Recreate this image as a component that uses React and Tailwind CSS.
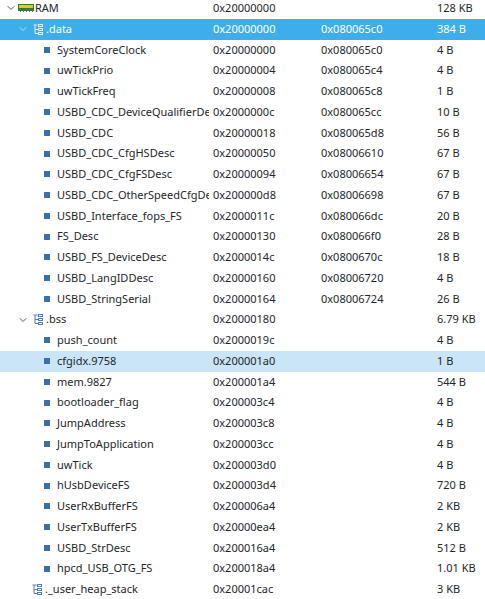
import { ChevronDown } from 'lucide-react';

const rows = [
  { t: 'group', name: 'RAM', a: '0x20000000', l: '', s: '128 KB', lvl: 0 },
  { t: 'sec', name: '.data', a: '0x20000000', l: '0x080065c0', s: '384 B', sel: 'strong' },
  { t: 'sym', name: 'SystemCoreClock', a: '0x20000000', l: '0x080065c0', s: '4 B' },
  { t: 'sym', name: 'uwTickPrio', a: '0x20000004', l: '0x080065c4', s: '4 B' },
  { t: 'sym', name: 'uwTickFreq', a: '0x20000008', l: '0x080065c8', s: '1 B' },
  { t: 'sym', name: 'USBD_CDC_DeviceQualifierDesc', a: '0x2000000c', l: '0x080065cc', s: '10 B' },
  { t: 'sym', name: 'USBD_CDC', a: '0x20000018', l: '0x080065d8', s: '56 B' },
  { t: 'sym', name: 'USBD_CDC_CfgHSDesc', a: '0x20000050', l: '0x08006610', s: '67 B' },
  { t: 'sym', name: 'USBD_CDC_CfgFSDesc', a: '0x20000094', l: '0x08006654', s: '67 B' },
  { t: 'sym', name: 'USBD_CDC_OtherSpeedCfgDesc', a: '0x200000d8', l: '0x08006698', s: '67 B' },
  { t: 'sym', name: 'USBD_Interface_fops_FS', a: '0x2000011c', l: '0x080066dc', s: '20 B' },
  { t: 'sym', name: 'FS_Desc', a: '0x20000130', l: '0x080066f0', s: '28 B' },
  { t: 'sym', name: 'USBD_FS_DeviceDesc', a: '0x2000014c', l: '0x0800670c', s: '18 B' },
  { t: 'sym', name: 'USBD_LangIDDesc', a: '0x20000160', l: '0x08006720', s: '4 B' },
  { t: 'sym', name: 'USBD_StringSerial', a: '0x20000164', l: '0x08006724', s: '26 B' },
  { t: 'sec', name: '.bss', a: '0x20000180', l: '', s: '6.79 KB' },
  { t: 'sym', name: 'push_count', a: '0x2000019c', l: '', s: '4 B' },
  { t: 'sym', name: 'cfgidx.9758', a: '0x200001a0', l: '', s: '1 B', sel: 'light' },
  { t: 'sym', name: 'mem.9827', a: '0x200001a4', l: '', s: '544 B' },
  { t: 'sym', name: 'bootloader_flag', a: '0x200003c4', l: '', s: '4 B' },
  { t: 'sym', name: 'JumpAddress', a: '0x200003c8', l: '', s: '4 B' },
  { t: 'sym', name: 'JumpToApplication', a: '0x200003cc', l: '', s: '4 B' },
  { t: 'sym', name: 'uwTick', a: '0x200003d0', l: '', s: '4 B' },
  { t: 'sym', name: 'hUsbDeviceFS', a: '0x200003d4', l: '', s: '720 B' },
  { t: 'sym', name: 'UserRxBufferFS', a: '0x200006a4', l: '', s: '2 KB' },
  { t: 'sym', name: 'UserTxBufferFS', a: '0x20000ea4', l: '', s: '2 KB' },
  { t: 'sym', name: 'USBD_StrDesc', a: '0x200016a4', l: '', s: '512 B' },
  { t: 'sym', name: 'hpcd_USB_OTG_FS', a: '0x200018a4', l: '', s: '1.01 KB' },
  { t: 'leaf', name: '._user_heap_stack', a: '0x20001cac', l: '', s: '3 KB' },
];

// chip icon for memory region
function RamIcon() {
  return (
    <svg width="16" height="10" viewBox="0 0 16 10">
      <rect x="0" y="1" width="16" height="7" fill="#2e7d32" />
      <rect x="1" y="2" width="14" height="3" fill="#f0c419" />
      <rect x="2" y="6" width="1" height="3" fill="#666" />
      <rect x="5" y="6" width="1" height="3" fill="#666" />
      <rect x="8" y="6" width="1" height="3" fill="#666" />
      <rect x="11" y="6" width="1" height="3" fill="#666" />
      <rect x="14" y="6" width="1" height="3" fill="#666" />
    </svg>
  );
}

// tree-ish section icon
function SecIcon({ white }) {
  const c = white ? '#dbeefb' : '#4f7fb0';
  return (
    <svg width="10" height="11" viewBox="0 0 10 11" fill="none" stroke={c} strokeWidth="1">
      <path d="M0.5 1h4M2 1v8.5h3M2 5.5h3" />
      <rect x="5.5" y="4.5" width="4" height="2" />
      <rect x="5.5" y="8.5" width="4" height="2" />
      <rect x="5.5" y="0.5" width="4" height="2" />
    </svg>
  );
}

export default function App() {
  return (
    <div className="w-[485px] h-[599px] overflow-hidden bg-white text-[11px] text-[#232629]" style={{ fontFamily: '"Noto Sans", sans-serif' }}>
      <div className="-mt-[2px]">
        {rows.map((r, i) => {
          const strong = r.sel === 'strong';
          const bg = strong ? 'bg-[#3daee9] text-white' : r.sel === 'light' ? 'bg-[#c9e5f7]' : '';
          return (
            <div key={i} className={`flex items-center h-[20.75px] ${bg}`}>
              <div className="w-[209px] flex items-center overflow-hidden whitespace-nowrap">
                {r.t === 'group' && (
                  <>
                    <ChevronDown size={12} className="ml-[4px] w-[14px] shrink-0" strokeWidth={1.5} />
                    <span className="ml-0"><RamIcon /></span>
                    <span className="ml-[1px]">{r.name}</span>
                  </>
                )}
                {r.t === 'sec' && (
                  <>
                    <ChevronDown size={12} className={`ml-[17px] shrink-0 ${strong ? 'text-[#dbeefb]' : ''}`} strokeWidth={1.5} />
                    <span className="ml-[4px] flex"><SecIcon white={strong} /></span>
                    <span className="ml-[3px]">{r.name}</span>
                  </>
                )}
                {r.t === 'sym' && (
                  <>
                    <span className="ml-[44px] w-[6px] h-[6px] bg-[#3c6fa8] shrink-0" />
                    <span className="ml-[7px]">{r.name}</span>
                  </>
                )}
                {r.t === 'leaf' && (
                  <>
                    <span className="ml-[32px] flex"><SecIcon /></span>
                    <span className="ml-[3px]">{r.name}</span>
                  </>
                )}
              </div>
              <div className="w-[4px]" />
              <div className="w-[108px]">{r.a}</div>
              <div className="w-[116px]">{r.l}</div>
              <div className="flex-1">{r.s}</div>
            </div>
          );
        })}
      </div>
    </div>
  );
}
